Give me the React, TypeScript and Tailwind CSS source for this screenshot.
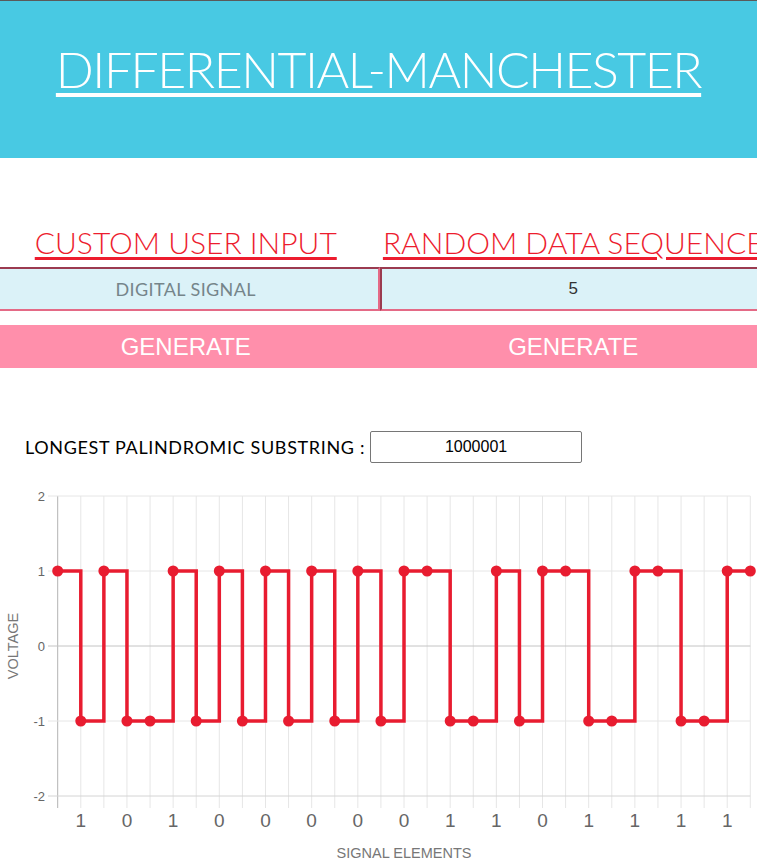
const levels = [1, -1, 1, -1, -1, 1, -1, 1, -1, 1, -1, 1, -1, 1, -1, 1, 1, -1, -1, 1, -1, 1, 1, -1, -1, 1, 1, -1, -1, 1, 1];
const bits = ["1", "0", "1", "0", "0", "0", "0", "0", "1", "1", "0", "1", "1", "1", "1"];

const X0 = 57.7;
const STEP = 23.087;
const px = (i: number) => X0 + i * STEP;
const py = (v: number) => 169 - 75 * v;

function SignalChart() {
  let d = `M ${px(0)} ${py(levels[0])}`;
  for (let i = 1; i < levels.length; i++) {
    d += ` H ${px(i)} V ${py(levels[i])}`;
  }
  const right = px(30);

  return (
    <svg width="757" height="390" className="block" fontFamily="'Liberation Sans', Arial, sans-serif">
      {/* grid */}
      {levels.map((_, i) => (
        <line key={"v" + i} x1={px(i)} x2={px(i)} y1={py(2)} y2={331} stroke={i === 0 ? "#b3b3b3" : "#e6e6e6"} strokeWidth="1" />
      ))}
      {[2, 1, 0, -1, -2].map((v) => (
        <line key={"h" + v} x1={48} x2={right} y1={py(v)} y2={py(v)} stroke={v === 0 ? "#c4c4c4" : v === -2 ? "#d4d4d4" : "#e6e6e6"} strokeWidth="1" />
      ))}
      {[2, 1, 0, -1, -2].map((v) => (
        <text key={"t" + v} x={45} y={py(v) + 5} textAnchor="end" fontSize="13" fill="#666">
          {v}
        </text>
      ))}
      <text x={0} y={0} transform={`translate(18 ${py(0)}) rotate(-90)`} textAnchor="middle" fontSize="14.5" fill="#777">
        VOLTAGE
      </text>
      {bits.map((b, k) => (
        <text key={"b" + k} x={px(2 * k + 1)} y={350} textAnchor="middle" fontSize="19" fill="#666">
          {b}
        </text>
      ))}
      <text x={404} y={381} textAnchor="middle" fontSize="14.5" fill="#777">
        SIGNAL ELEMENTS
      </text>
      <path d={d} fill="none" stroke="#e81c30" strokeWidth="3.5" />
      {levels.map((v, i) => (
        <circle key={"c" + i} cx={px(i)} cy={py(v)} r="5.5" fill="#e81c30" />
      ))}
    </svg>
  );
}

export default function App() {
  return (
    <div className="w-[757px] overflow-hidden bg-white border-t border-[#5a5a5a]">
      <div className="h-[157px] bg-[#48c9e3] pt-[38px] text-center">
        <h1 className="[font-family:Lato,'Open_Sans',sans-serif] text-[50px] leading-[1.2] font-light tracking-[-1.5px] text-white underline decoration-[4px] underline-offset-[5px]">
          DIFFERENTIAL-MANCHESTER
        </h1>
      </div>

      <div className="flex w-[775px] -ml-[8px] pt-[66px]">
        <div className="w-1/2 flex flex-col">
          <h2 className="[font-family:Lato,'Open_Sans',sans-serif] text-center text-[30px] leading-[1.2] font-light text-[#ed1c2e] underline decoration-[2.5px] underline-offset-[3px] whitespace-nowrap">
            CUSTOM USER INPUT
          </h2>
          <input
            className="[font-family:Lato,'Open_Sans',sans-serif] mt-[7px] h-[44px] w-full bg-[#dbf2f8] border-2 border-t-[#9b3b50] border-l-[#9b3b50] border-b-[#e46a86] border-r-[#e46a86] text-center text-[18px] tracking-[0.4px] placeholder:text-[#75858a] outline-none"
            placeholder="DIGITAL SIGNAL"
          />
          <button className="[font-family:'Liberation_Sans',Arial,sans-serif] mt-[14px] h-[43px] w-full bg-[#ff8fab] text-white text-[24px]">
            GENERATE
          </button>
        </div>
        <div className="w-1/2 flex flex-col">
          <h2 className="[font-family:Lato,'Open_Sans',sans-serif] text-center text-[30px] leading-[1.2] font-light text-[#ed1c2e] underline decoration-[2.5px] underline-offset-[3px] whitespace-nowrap">
            RANDOM DATA SEQUENCE
          </h2>
          <input
            readOnly
            value="5"
            className="[font-family:'Liberation_Sans',Arial,sans-serif] mt-[7px] h-[44px] w-full bg-[#dbf2f8] border-2 border-t-[#9b3b50] border-l-[#9b3b50] border-b-[#e46a86] border-r-[#e46a86] text-center text-[17px] text-[#333] outline-none"
          />
          <button className="[font-family:'Liberation_Sans',Arial,sans-serif] mt-[14px] h-[43px] w-full bg-[#ff8fab] text-white text-[24px]">
            GENERATE
          </button>
        </div>
      </div>

      <div className="flex items-center pl-[25px] pt-[63px]">
        <span className="[font-family:Lato,'Open_Sans',sans-serif] text-[18px] tracking-[0.65px] text-black whitespace-nowrap">
          LONGEST PALINDROMIC SUBSTRING :
        </span>
        <input
          readOnly
          value="1000001"
          className="[font-family:'Liberation_Sans',Arial,sans-serif] ml-[5px] h-[32px] w-[212px] border border-[#767676] rounded-[2px] text-center text-[16px] text-black outline-none"
        />
      </div>

      <div className="mt-[14px]">
        <SignalChart />
      </div>
    </div>
  );
}
